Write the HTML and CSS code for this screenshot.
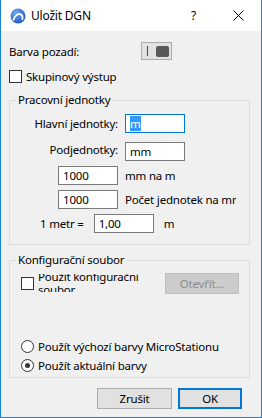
FILE: index.html
```html
<!DOCTYPE html>
<html>
<head>
<title>Uložit DGN</title>
<meta name="viewport" content="width=device-width, initial-scale=1.0">
<link rel="stylesheet" href="styles.css">
</head>
<body>
<div class="window">
  <div class="titlebar">
    <svg class="app-icon" width="16" height="16" viewBox="0 0 16 16">
      <defs>
        <radialGradient id="g" cx="0.35" cy="0.3" r="0.8">
          <stop offset="0" stop-color="#6fa8f0"/>
          <stop offset="1" stop-color="#1b56c4"/>
        </radialGradient>
      </defs>
      <circle cx="8" cy="8" r="7.5" fill="url(#g)"/>
      <path d="M2.5 12.5 C4 6 9 3.5 12.5 6.5 C13.8 7.8 13.6 10 13 12 L11.5 12 C12 9.5 11.5 7.5 9.8 7 C7 6.3 5 9 4.2 12.5 Z" fill="#fff"/>
    </svg>
    <span class="title">Uložit DGN</span>
    <span class="help">?</span>
    <svg class="close" width="11" height="11" viewBox="0 0 11 11">
      <path d="M0.5 0.5 L10.5 10.5 M10.5 0.5 L0.5 10.5" stroke="#000" stroke-width="1"/>
    </svg>
  </div>

  <div class="content">
    <div class="row bg-row">
      <span>Barva pozadí:</span>
      <div class="toggle"><span class="tick"></span><span class="swatch"></span></div>
    </div>

    <label class="row check-row">
      <span class="box"></span>
      <span>Skupinový výstup</span>
    </label>

    <fieldset class="group units">
      <legend>Pracovní jednotky</legend>
      <div class="grid">
        <span class="lbl">Hlavní jednotky:</span>
        <div class="field focused"><span class="sel">m</span></div>

        <span class="lbl">Podjednotky:</span>
        <div class="field">mm</div>

        <div class="field narrow">1000</div>
        <span class="txt">mm na m</span>

        <div class="field narrow">1000</div>
        <span class="txt clip">Počet jednotek na mn</span>
      </div>
      <div class="metr-row">
        <span class="metr">1 metr =</span>
        <div class="field">1,00</div>
        <span>m</span>
      </div>
    </fieldset>

    <fieldset class="group config">
      <legend>Konfigurační soubor</legend>
      <div class="cfg-row">
        <span class="box"></span>
        <div class="wrap"><div class="wrap-in">Použít konfigurační soubor</div></div>
        <div class="btn disabled">Otevřít...</div>
      </div>
      <div class="radios">
        <label class="radio-row"><span class="radio"></span>Použít výchozí barvy MicroStationu</label>
        <label class="radio-row"><span class="radio on"></span>Použít aktuální barvy</label>
      </div>
    </fieldset>

    <div class="buttons">
      <div class="btn cancel">Zrušit</div>
      <div class="btn ok">OK</div>
    </div>
  </div>
</div>
</body>
</html>
```

FILE: styles.css
```css
body {
  margin: 0;
  font-family: "Noto Sans", "Open Sans", sans-serif;
  font-size: 11.5px;
  letter-spacing: -0.2px;
  color: #000;
}

.window {
  width: 262px;
  height: 418px;
  box-sizing: border-box;
  border: 1px solid #1883d7;
  border-top: 0;
  background: #f0f0f0;
  overflow: hidden;
}

.titlebar {
  height: 31px;
  background: #fff;
  display: flex;
  align-items: center;
}

.app-icon {
  margin-left: 9px;
  margin-top: 1px;
}

.title {
  margin-left: 5px;
  font-size: 12px;
  flex: 1;
}

.help {
  margin-right: 37px;
  font-size: 12px;
}

.close {
  margin-right: 17px;
}

.content {
  padding: 0 11px 0 8px;
}

.row {
  display: flex;
  align-items: center;
}

.bg-row {
  margin-top: 11px;
  height: 18px;
}

.toggle {
  margin-left: 62px;
  width: 29px;
  height: 16px;
  border: 1px solid #adadad;
  background: #e1e1e1;
  display: flex;
  align-items: center;
}

.tick {
  width: 1px;
  height: 10px;
  background: #444;
  margin-left: 5px;
}

.swatch {
  width: 13px;
  height: 11px;
  border-radius: 2px;
  background: #595959;
  margin-left: 8px;
}

.check-row {
  margin-top: 9px;
  height: 14px;
}

.box {
  display: inline-block;
  width: 11px;
  height: 11px;
  border: 1px solid #333;
  background: #fff;
  margin-right: 4px;
  flex: none;
}

.group {
  margin: 0;
  padding: 0;
  border: 1px solid #dcdcdc;
  width: 241px;
  box-sizing: border-box;
}

.group legend {
  margin-left: 6px;
  padding: 0 2px;
  line-height: 14px;
}

.units {
  margin-top: 10px;
  padding-bottom: 11px;
}

.grid {
  display: grid;
  grid-template-columns: 108px 60px;
  column-gap: 7px;
  row-gap: 5px;
  align-items: center;
  margin-top: 7px;
}

.grid .lbl {
  text-align: right;
}

.field {
  height: 17px;
  border: 1px solid #7a7a7a;
  background: #fff;
  line-height: 17px;
  padding-left: 4px;
  box-sizing: content-box;
  width: 54px;
}

.grid .field:nth-child(4) {
  margin-top: 4px;
}

.focused {
  border-color: #0078d7;
}

.sel {
  background: #3399ff;
  color: #fff;
}

.narrow {
  justify-self: end;
}

.txt {
  white-space: nowrap;
}

.clip {
  width: 111px;
  overflow: hidden;
}

.metr-row {
  display: flex;
  align-items: center;
  margin-top: 5px;
}

.metr {
  margin-left: 30px;
  margin-right: 10px;
}

.metr-row .field {
  margin-right: 10px;
}

.config {
  margin-top: 8px;
  height: 125px;
}

.cfg-row {
  display: flex;
  align-items: center;
  height: 22px;
  margin-top: 5px;
}

.cfg-row .box {
  margin-left: 11px;
}

.wrap {
  width: 120px;
  height: 18px;
  overflow: hidden;
}

.wrap-in {
  line-height: 13px;
  margin-top: -4px;
}

.btn {
  box-sizing: border-box;
  height: 21px;
  border: 1px solid #adadad;
  background: #e1e1e1;
  display: flex;
  align-items: center;
  justify-content: center;
}

.disabled {
  width: 74px;
  margin-left: 7px;
  background: #cccccc;
  border-color: #bfbfbf;
  color: #8c8c8c;
}

.radios {
  margin-top: 45px;
  display: flex;
  flex-direction: column;
  gap: 5px;
}

.radio-row {
  display: flex;
  align-items: center;
  height: 14px;
  margin-left: 11px;
}

.radio {
  width: 11px;
  height: 11px;
  border: 1px solid #333;
  border-radius: 50%;
  background: #fff;
  margin-right: 4px;
  position: relative;
}

.radio.on::after {
  content: "";
  position: absolute;
  left: 3px;
  top: 3px;
  width: 5px;
  height: 5px;
  border-radius: 50%;
  background: #333;
}

.buttons {
  display: flex;
  justify-content: flex-end;
  gap: 6px;
  margin-top: 10px;
  padding-right: 8px;
}

.cancel {
  width: 75px;
}

.ok {
  width: 64px;
  border: 2px solid #0078d7;
}
```
